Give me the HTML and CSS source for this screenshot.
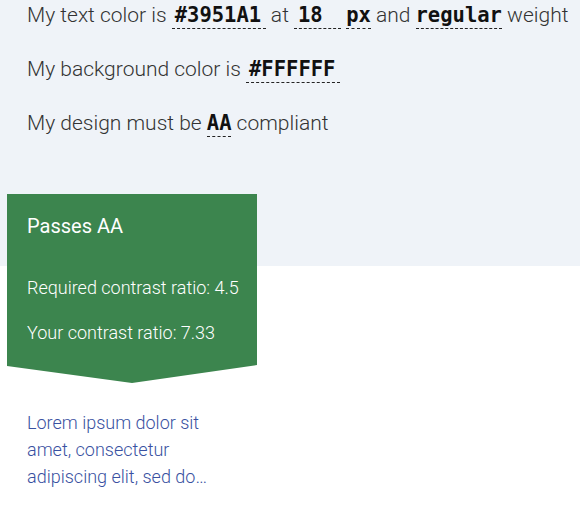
FILE: index.html
```html
<!DOCTYPE html>
<html>
<head>
<meta charset="utf-8">
<link rel="stylesheet" href="styles.css">
</head>
<body>
<div class="page">
  <section class="settings">
    <p class="line">My text color is <span class="field field-hex">#3951A1</span> at <span class="field field-num">18</span> <span class="field">px</span> and <span class="field">regular</span> weight</p>
    <p class="line">My background color is <span class="field field-hex">#FFFFFF</span></p>
    <p class="line">My design must be <span class="field">AA</span> compliant</p>
  </section>
  <div class="result">
    <h2 class="result-title">Passes AA</h2>
    <p class="result-row">Required contrast ratio: 4.5</p>
    <p class="result-row">Your contrast ratio: 7.33</p>
  </div>
  <p class="preview">Lorem ipsum dolor sit amet, consectetur adipiscing elit, sed do…</p>
</div>
</body>
</html>
```
FILE: styles.css
```css
* { box-sizing: border-box; }
html, body { margin: 0; padding: 0; }
body {
  font-family: Roboto, "Liberation Sans", sans-serif;
  background: #fff;
}
.page {
  width: 580px;
  height: 510px;
  background: linear-gradient(to bottom, #eff3f8 0, #eff3f8 266px, #fff 266px) no-repeat;
  overflow: hidden;
}
.settings {
  padding: 0 0 0 27px;
  height: 194px;
}
.line {
  margin: 0 0 24px 0;
  font-size: 21px;
  font-weight: 300;
  line-height: 30px;
  color: #333;
  white-space: nowrap;
}
.field {
  display: inline-block;
  font-family: "DejaVu Sans Mono", "Liberation Mono", monospace;
  font-weight: bold;
  font-size: 20.5px;
  color: #111;
  line-height: 25px;
  padding: 0;
  border-bottom: 1px dashed #222;
}
.field-hex { width: 94px; padding-left: 3px; }
.field-num { width: 47px; padding-left: 4px; }
.result {
  margin-left: 7px;
  width: 250px;
  height: 189px;
  background: #3c854e;
  color: #fff;
  padding: 20px 10px 0 20px;
  clip-path: polygon(0 0, 100% 0, 100% 171px, 50% 100%, 0 172px);
}
.result-title {
  margin: 0 0 38px 0;
  font-size: 20px;
  font-weight: 400;
  line-height: 24px;
}
.result-row {
  margin: 0 0 21px 0;
  font-size: 18px;
  font-weight: 300;
  line-height: 24px;
}
.preview {
  margin: 26px 0 0 27px;
  width: 210px;
  font-size: 18px;
  font-weight: 300;
  line-height: 27px;
  color: #3951a1;
}
```
